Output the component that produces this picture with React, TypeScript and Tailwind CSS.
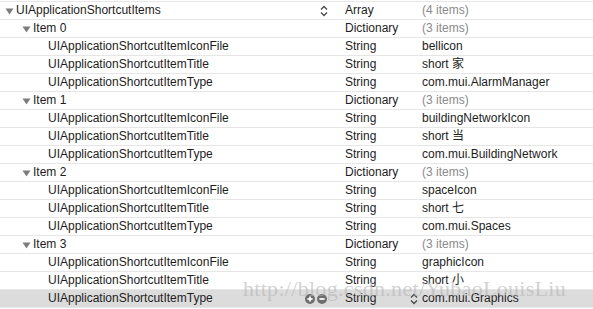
import React from "react";

type Row = {
  key: string;
  level: 0 | 1 | 2;
  type: string;
  value: string;
  muted?: boolean;
};

const rows: Row[] = [
  { key: "UIApplicationShortcutItems", level: 0, type: "Array", value: "(4 items)", muted: true },
  { key: "Item 0", level: 1, type: "Dictionary", value: "(3 items)", muted: true },
  { key: "UIApplicationShortcutItemIconFile", level: 2, type: "String", value: "bellicon" },
  { key: "UIApplicationShortcutItemTitle", level: 2, type: "String", value: "short 家" },
  { key: "UIApplicationShortcutItemType", level: 2, type: "String", value: "com.mui.AlarmManager" },
  { key: "Item 1", level: 1, type: "Dictionary", value: "(3 items)", muted: true },
  { key: "UIApplicationShortcutItemIconFile", level: 2, type: "String", value: "buildingNetworkIcon" },
  { key: "UIApplicationShortcutItemTitle", level: 2, type: "String", value: "short 当" },
  { key: "UIApplicationShortcutItemType", level: 2, type: "String", value: "com.mui.BuildingNetwork" },
  { key: "Item 2", level: 1, type: "Dictionary", value: "(3 items)", muted: true },
  { key: "UIApplicationShortcutItemIconFile", level: 2, type: "String", value: "spaceIcon" },
  { key: "UIApplicationShortcutItemTitle", level: 2, type: "String", value: "short 七" },
  { key: "UIApplicationShortcutItemType", level: 2, type: "String", value: "com.mui.Spaces" },
  { key: "Item 3", level: 1, type: "Dictionary", value: "(3 items)", muted: true },
  { key: "UIApplicationShortcutItemIconFile", level: 2, type: "String", value: "graphicIcon" },
  { key: "UIApplicationShortcutItemTitle", level: 2, type: "String", value: "short 小" },
  { key: "UIApplicationShortcutItemType", level: 2, type: "String", value: "com.mui.Graphics" },
];

const Triangle = () => (
  <svg width="9" height="8" viewBox="0 0 9 8" className="shrink-0">
    <path d="M0.5 1.5 H8.5 L4.5 7.5 Z" fill="#7d7d7d" />
  </svg>
);

const Stepper = () => (
  <svg width="8" height="12" viewBox="0 0 8 12" className="shrink-0">
    <path d="M1 4.5 L4 1.5 L7 4.5" fill="none" stroke="#4a4a4a" strokeWidth="1.3" />
    <path d="M1 7.5 L4 10.5 L7 7.5" fill="none" stroke="#4a4a4a" strokeWidth="1.3" />
  </svg>
);

const RoundButton = ({ plus }: { plus?: boolean }) => (
  <svg width="10" height="10" viewBox="0 0 10 10" className="shrink-0">
    <circle cx="5" cy="5" r="5" fill="#6e6e6e" />
    <path d="M2.4 5 H7.6" stroke="#fff" strokeWidth="1.7" />
    {plus && <path d="M5 2.4 V7.6" stroke="#fff" strokeWidth="1.7" />}
  </svg>
);

const KeyCell = ({ row, last, first }: { row: Row; last: boolean; first: boolean }) => {
  const pad = row.level === 0 ? "pl-[5px]" : row.level === 1 ? "pl-[22px]" : "pl-[48px]";
  return (
    <div className={`flex items-center w-[345px] shrink-0 ${pad}`}>
      {row.level < 2 && (
        <span className="mr-[2px] flex items-center">
          <Triangle />
        </span>
      )}
      <span className="flex-1 truncate">{row.key}</span>
      {first && (
        <span className="mr-[17px] flex items-center">
          <Stepper />
        </span>
      )}
      {last && (
        <span className="mr-[18px] flex items-center gap-[2px]">
          <RoundButton plus />
          <RoundButton />
        </span>
      )}
    </div>
  );
};

export default function App() {
  return (
    <div
      className="relative w-[593px] h-[309px] overflow-hidden bg-white text-[#1d1d1d] text-[12px] pt-[1px]"
      style={{ fontFamily: '"Liberation Sans", "Noto Sans CJK SC", sans-serif' }}
    >
      {rows.map((row, i) => {
        const last = i === rows.length - 1;
        return (
          <div
            key={i}
            className={`flex h-[18px] border-t border-[#e6e6e6] leading-[17px] ${
              last ? "bg-[#dcdcdc]" : ""
            }`}
          >
            <KeyCell row={row} last={last} first={i === 0} />
            <div className="flex items-center w-[77px] shrink-0">
              <span className="flex-1">{row.type}</span>
              {last && (
                <span className="mr-[4px] flex items-center">
                  <Stepper />
                </span>
              )}
            </div>
            <div className={`flex-1 truncate ${row.muted ? "text-[#8a8a8a]" : ""}`}>{row.value}</div>
          </div>
        );
      })}
      <div className="border-t border-[#e6e6e6]" />

      <div
        className="absolute left-[243px] top-[278px] text-[22px] tracking-[0.3px] leading-none text-[#b4b4b4]/60 whitespace-nowrap pointer-events-none"
        style={{ fontFamily: '"Liberation Serif", serif' }}
      >
        http://blog.csdn.net/YubaoLouisLiu
      </div>
    </div>
  );
}
